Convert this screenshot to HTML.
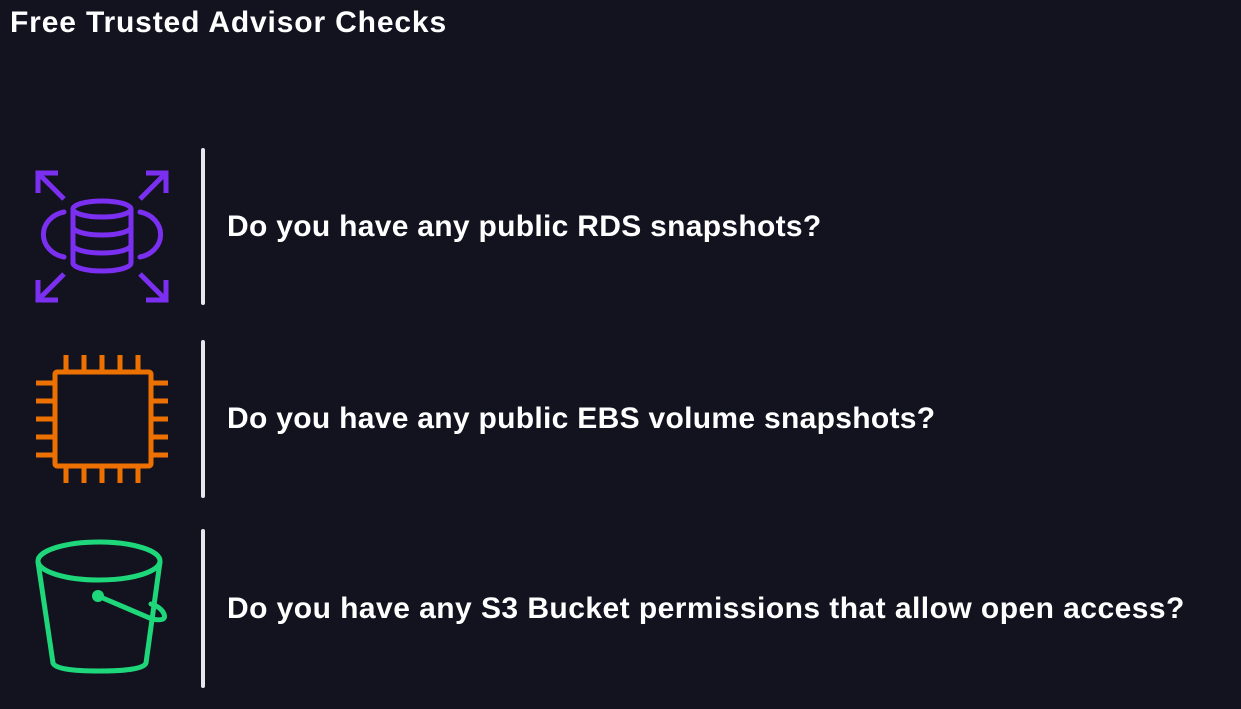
<!DOCTYPE html><html><head><style>
body{margin:0;width:1241px;height:709px;background:#13121f;overflow:hidden;position:relative;font-family:"Liberation Sans",sans-serif;color:#fff}
.t{position:absolute;font-weight:bold;white-space:nowrap}
.bar{position:absolute;left:201px;width:4px;background:#e6e6ee;border-radius:2px}
</style></head><body>
<div class="t" style="left:10px;top:6px;font-size:30px;letter-spacing:0.85px">Free Trusted Advisor Checks</div>
<div class="bar" style="top:148px;height:157px"></div>
<div class="bar" style="top:340px;height:158px"></div>
<div class="bar" style="top:529px;height:159px"></div>
<div class="t" style="left:227px;top:210px;font-size:30px;letter-spacing:0.3px">Do you have any public RDS snapshots?</div>
<div class="t" style="left:227px;top:402px;font-size:30px;letter-spacing:0.3px">Do you have any public EBS volume snapshots?</div>
<div class="t" style="left:227px;top:592px;font-size:30px;letter-spacing:0.45px">Do you have any S3 Bucket permissions that allow open access?</div>
<svg width="1241" height="709" style="position:absolute;left:0;top:0" fill="none" stroke-linecap="round">
<g stroke="#7b2ff0" stroke-width="5">
<path d="M38 193V173H58M38 173L64 199" stroke-linecap="butt"/>
<path d="M166 193V173H146M166 173L140 199" stroke-linecap="butt"/>
<path d="M38 280V300H58M38 300L64 274" stroke-linecap="butt"/>
<path d="M166 280V300H146M166 300L140 274" stroke-linecap="butt"/>
<ellipse cx="102" cy="209" rx="29" ry="8"/>
<path d="M73 209V263A29 8 0 0 0 131 263V209M73 227A29 8 0 0 0 131 227M73 245A29 8 0 0 0 131 245"/>
<path d="M64 212A26 23 0 0 0 64 257M140 212A26 23 0 0 1 140 257"/>
</g>
<g stroke="#ed7100" stroke-width="5">
<rect x="55" y="372" width="96" height="94" rx="2"/>
<path d="M66 355V372M84 355V372M102 355V372M120 355V372M138 355V372M66 466V483M84 466V483M102 466V483M120 466V483M138 466V483M36 383H55M36 401H55M36 419H55M36 437H55M36 455H55M151 383H168M151 401H168M151 419H168M151 437H168M151 455H168" stroke-linecap="butt"/>
</g>
<g stroke="#1dd77a" stroke-width="5">
<ellipse cx="99" cy="561" rx="61" ry="19"/>
<path d="M38 562L53 663Q56 671 99 671Q143 671 146 663L160 562"/>
<path d="M98 596L152 619Q167 622 164 614Q161 607 151 604"/>
</g>
<circle cx="98" cy="596" r="6" fill="#1dd77a"/>
</svg>
</body></html>
